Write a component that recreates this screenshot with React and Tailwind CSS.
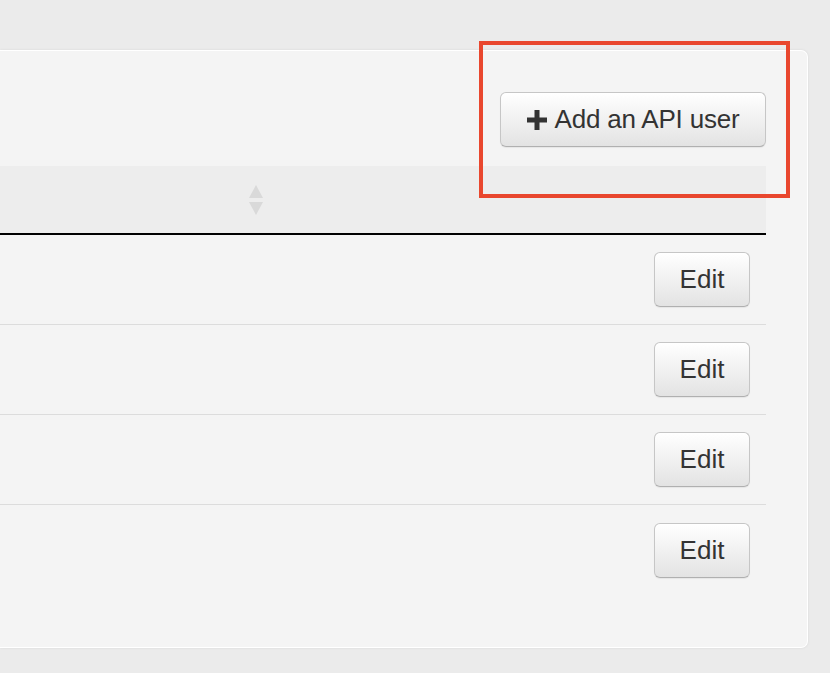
import React from "react";

function PlusIcon() {
  return (
    <svg width="20" height="20" viewBox="0 0 20 20" className="shrink-0">
      <path d="M7.5 0h5v7.5H20v5h-7.5V20h-5v-7.5H0v-5h7.5z" fill="#333" />
    </svg>
  );
}

function SortIcon() {
  return (
    <svg width="16" height="30" viewBox="0 0 16 30">
      <path d="M8 0L15 13H1z" fill="#d9d9d9" />
      <path d="M8 30L15 17H1z" fill="#d9d9d9" />
    </svg>
  );
}

const btn =
  "flex items-center justify-center rounded-[6px] border border-[#c6c6c6] border-b-[#b0b0b0] bg-gradient-to-b from-white to-[#e3e3e3] text-[#333] shadow-[inset_0_1px_0_rgba(255,255,255,0.9),0_1px_1px_rgba(0,0,0,0.06)]";

export default function App() {
  const rows = [1, 2, 3, 4];
  return (
    <div
      className="relative h-[673px] w-[830px] overflow-hidden bg-[#ebebeb] pt-[50px] pr-[22px]"
      style={{ fontFamily: '"Liberation Sans", Arial, sans-serif' }}
    >
      <div className="h-[598px] rounded-r-[7px] border border-l-0 border-white bg-[#f4f4f4] pt-[41px] pr-[41px] shadow-[0_0_3px_rgba(0,0,0,0.08)]">
        <div className="flex justify-end">
          <button className={`${btn} h-[55px] w-[266px] gap-[8px] text-[26px] tracking-[-0.2px]`}>
            <PlusIcon />
            <span>Add an API user</span>
          </button>
        </div>

        <div className="mt-[19px]">
          <div className="flex h-[69px] items-center border-b-2 border-black bg-[#ededed]">
            <div className="flex w-[264px] justify-end">
              <SortIcon />
            </div>
          </div>
          {rows.map((r, i) => (
            <div
              key={r}
              className={`flex h-[90px] items-center justify-end pr-[16px] ${
                i < rows.length - 1 ? "border-b border-[#dcdcdc]" : ""
              }`}
            >
              <button className={`${btn} h-[55px] w-[96px] text-[26px]`}>Edit</button>
            </div>
          ))}
        </div>
      </div>

      <div className="pointer-events-none absolute left-[479px] top-[41px] h-[157px] w-[311px] border-[4px] border-[#e9472e]" />
    </div>
  );
}
